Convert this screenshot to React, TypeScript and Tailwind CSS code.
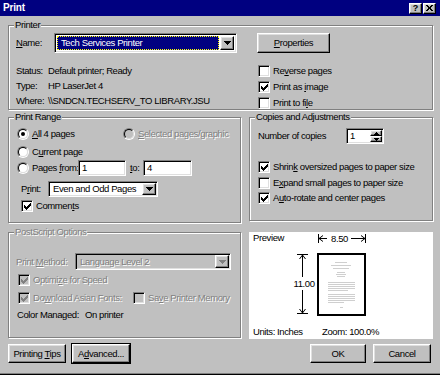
import React from 'react';

const raised =
  'border border-t-white border-l-white border-r-black border-b-black shadow-[inset_-1px_-1px_0_#808080,inset_1px_1px_0_#dfdfdf]';
const sunken =
  'border border-t-[#808080] border-l-[#808080] border-r-white border-b-white shadow-[inset_1px_1px_0_#000,inset_-1px_-1px_0_#dfdfdf]';
const dim = 'text-[#808080] [text-shadow:1px_1px_0_#fff]';

const Key = ({ children }: { children: React.ReactNode }) => <span className="underline">{children}</span>;

const Group = ({
  label,
  disabled,
  className,
  children,
}: {
  label: string;
  disabled?: boolean;
  className?: string;
  children: React.ReactNode;
}) => (
  <div className={`relative border border-[#808080] shadow-[1px_1px_0_#fff,inset_1px_1px_0_#fff] ${className}`}>
    <span className={`absolute -top-[7px] left-[5px] bg-[#c0c0c0] px-[1px] leading-[12px] ${disabled ? dim : ''}`}>
      {label}
    </span>
    {children}
  </div>
);

const CheckBox = ({ checked, disabled }: { checked?: boolean; disabled?: boolean }) => (
  <span
    className={`${sunken} w-[12px] h-[12px] shrink-0 flex items-center justify-center ${
      disabled ? 'bg-[#c0c0c0]' : 'bg-white'
    }`}
  >
    {checked && (
      <svg width="7" height="7" viewBox="0 0 7 7" shapeRendering="crispEdges">
        <path
          d="M6 0h1v1h-1z M5 1h2v1h-2z M0 2h1v1h-1z M4 2h3v1h-3z M0 3h2v1h-2z M3 3h3v1h-3z M0 4h5v1h-5z M1 5h3v1h-3z M2 6h1v1h-1z"
          fill={disabled ? '#808080' : '#000'}
        />
      </svg>
    )}
  </span>
);

const Radio = ({ checked, disabled }: { checked?: boolean; disabled?: boolean }) => (
  <span className="relative w-[12px] h-[12px] shrink-0 rounded-full border border-t-[#808080] border-l-[#808080] border-r-white border-b-white">
    <span
      className={`absolute inset-0 rounded-full border border-t-black border-l-black border-r-[#dfdfdf] border-b-[#dfdfdf] ${
        disabled ? 'bg-[#c0c0c0]' : 'bg-white'
      }`}
    />
    {checked && <span className="absolute left-[3px] top-[3px] w-[4px] h-[4px] rounded-full bg-black" />}
  </span>
);

const DownArrow = ({ disabled }: { disabled?: boolean }) => (
  <svg width="7" height="4" viewBox="0 0 7 4" shapeRendering="crispEdges">
    <path d="M0 0h7v1h-1v1h-1v1h-1v1h-1v-1h-1v-1h-1v-1h-1z" fill={disabled ? '#808080' : '#000'} />
  </svg>
);

const ArrowButton = ({ disabled }: { disabled?: boolean }) => (
  <span className={`${raised} bg-[#c0c0c0] w-[14px] h-full shrink-0 flex items-center justify-center`}>
    <DownArrow disabled={disabled} />
  </span>
);

const Select = ({ value, disabled, className }: { value: string; disabled?: boolean; className?: string }) => (
  <div className={`${sunken} ${disabled ? 'bg-[#c0c0c0]' : 'bg-white'} flex p-[1px] ${className}`}>
    <span className={`flex-1 pl-[3px] flex items-center whitespace-nowrap overflow-hidden ${disabled ? dim : ''}`}>
      {value}
    </span>
    <ArrowButton disabled={disabled} />
  </div>
);

const Field = ({ value, className }: { value: string; className?: string }) => (
  <div className={`${sunken} bg-white flex items-center pl-[3px] ${className}`}>{value}</div>
);

const CheckRow = ({
  checked,
  disabled,
  className,
  children,
}: {
  checked?: boolean;
  disabled?: boolean;
  className?: string;
  children: React.ReactNode;
}) => (
  <div className={`flex items-center gap-[3px] ${className}`}>
    <CheckBox checked={checked} disabled={disabled} />
    <span className={`whitespace-nowrap ${disabled ? dim : ''}`}>{children}</span>
  </div>
);

const Button = ({ className, children }: { className?: string; children: React.ReactNode }) => (
  <button className={`${raised} bg-[#c0c0c0] h-[19px] flex items-center justify-center ${className}`}>
    <span className="whitespace-nowrap">{children}</span>
  </button>
);

const PreviewDiagram = () => (
  <svg className="absolute left-0 top-0" width="184" height="107" viewBox="0 0 184 107">
    {/* width 8.50 */}
    <path d="M69.5 2v9M116.5 2v9M70 6.5h8M102 6.5h14" stroke="#000" fill="none" />
    <path d="M70 6.5l4 -3M70 6.5l4 3M116 6.5l-4 -3M116 6.5l-4 3" stroke="#000" fill="none" />
    <text x="90.5" y="10" textAnchor="middle" fontSize="9.5" fontFamily="Liberation Sans, Arial, sans-serif" letterSpacing="-0.4">
      8.50
    </text>
    {/* height 11.00 */}
    <path d="M48 22.5h11M48 81.5h11M53.5 23v22M53.5 58v23" stroke="#000" fill="none" />
    <path d="M53.5 23l-3 4M53.5 23l3 4M53.5 81l-3 -4M53.5 81l3 -4" stroke="#000" fill="none" />
    <text x="55" y="55" textAnchor="middle" fontSize="9.5" fontFamily="Liberation Sans, Arial, sans-serif" letterSpacing="-0.4">
      11.00
    </text>
    {/* page */}
    <rect x="69" y="22" width="47" height="61" fill="#fff" stroke="#000" strokeWidth="2" />
    <g fill="#cfcfcf">
      <rect x="86" y="30" width="12" height="1" />
      <rect x="82" y="33" width="20" height="1" />
      <rect x="84" y="36" width="16" height="1" />
      <rect x="88" y="40" width="8" height="1" />
      <rect x="87" y="42" width="10" height="1" />
      <rect x="88" y="44" width="8" height="1" />
      <rect x="79" y="50" width="27" height="1" />
      <rect x="79" y="52" width="27" height="1" />
      <rect x="79" y="54" width="27" height="1" />
      <rect x="79" y="56" width="27" height="1" />
      <rect x="79" y="58" width="20" height="1" />
      <rect x="79" y="62" width="27" height="1" />
      <rect x="79" y="64" width="27" height="1" />
      <rect x="79" y="66" width="27" height="1" />
      <rect x="79" y="68" width="27" height="1" />
      <rect x="79" y="70" width="16" height="1" />
      <rect x="91" y="75" width="3" height="1" />
    </g>
  </svg>
);

export default function App() {
  return (
    <div className="w-[440px] h-[375px] bg-[#c0c0c0] flex flex-col border-b border-black shadow-[inset_0_-1px_0_#808080] font-['Liberation_Sans',Arial,sans-serif] text-[9.5px] tracking-[-0.4px] leading-[12px] text-black">
      {/* Title bar */}
      <div className="h-[16px] bg-[#000080] flex items-center justify-between pl-[3px] pr-[4px]">
        <span className="text-white font-bold text-[10px] tracking-[-0.2px] leading-none">Print</span>
        <div className="flex gap-[1px]">
          <span className={`${raised} bg-[#c0c0c0] w-[13px] h-[11px] flex items-center justify-center text-[9px] font-bold leading-none tracking-normal`}>
            ?
          </span>
          <span className={`${raised} bg-[#c0c0c0] w-[13px] h-[11px] flex items-center justify-center`}>
            <svg width="7" height="6" viewBox="0 0 7 6" shapeRendering="crispEdges">
              <path d="M0 0h2v1h1v1h1v-1h1v-1h2v1h-1v1h-1v2h1v1h1v1h-2v-1h-1v-1h-1v1h-1v1h-2v-1h1v-1h1v-2h-1v-1h-1z" fill="#000" />
            </svg>
          </span>
        </div>
      </div>

      <div className="flex flex-col pl-[8px] pr-[7px]">
        {/* Printer */}
        <Group label="Printer" className="mt-[9px] h-[85px] pt-[7px] pl-[7px]">
          <div className="flex items-center h-[20px]">
            <span className="w-[38px]">
              <Key>N</Key>ame:
            </span>
            <div className={`${sunken} bg-white w-[183px] h-[20px] flex p-[2px] gap-[1px]`}>
              <span className="flex-1 bg-[#000080] text-white border border-dotted border-[#ffff00] flex items-center pl-[3px] whitespace-nowrap">
                Tech Services Printer
              </span>
              <ArrowButton />
            </div>
            <Button className="ml-[20px] w-[73px] h-[20px]">
              <Key>P</Key>roperties
            </Button>
          </div>
          <div className="flex mt-[10px]">
            <div className="w-[242px] flex flex-col">
              <div className="flex items-center h-[15px]">
                <span className="w-[32px]">Status:</span>
                <span>Default printer; Ready</span>
              </div>
              <div className="flex items-center h-[15px]">
                <span className="w-[32px]">Type:</span>
                <span>HP LaserJet 4</span>
              </div>
              <div className="flex items-center h-[15px]">
                <span className="w-[32px]">Where:</span>
                <span>\\SNDCN.TECHSERV_TO LIBRARY.JSU</span>
              </div>
            </div>
            <div className="flex flex-col">
              <CheckRow className="h-[16px]">
                Re<Key>v</Key>erse pages
              </CheckRow>
              <CheckRow checked className="h-[16px]">
                Print as <Key>i</Key>mage
              </CheckRow>
              <CheckRow className="h-[16px]">
                Print to fi<Key>l</Key>e
              </CheckRow>
            </div>
          </div>
        </Group>

        {/* Print range + copies */}
        <div className="flex justify-between items-start mt-[7px]">
          <Group label="Print Range" className="w-[233px] h-[106px] pt-[8px] pl-[8px]">
            <div className="flex items-center h-[16px]">
              <div className="w-[106px] flex items-center gap-[3px]">
                <Radio checked />
                <span>
                  <Key>A</Key>ll 4 pages
                </span>
              </div>
              <div className="flex items-center gap-[3px]">
                <Radio disabled />
                <span className={dim}>
                  <Key>S</Key>elected pages/graphic
                </span>
              </div>
            </div>
            <div className="flex items-center gap-[3px] h-[16px] mt-[2px]">
              <Radio />
              <span>
                C<Key>u</Key>rrent page
              </span>
            </div>
            <div className="flex items-center h-[16px]">
              <Radio />
              <span className="ml-[3px] w-[46px] whitespace-nowrap">
                Pages <Key>f</Key>rom:
              </span>
              <Field value="1" className="w-[48px] h-[16px]" />
              <span className="ml-[4px] w-[13px]">
                <Key>t</Key>o:
              </span>
              <Field value="4" className="w-[49px] h-[16px]" />
            </div>
            <div className="flex items-center h-[16px] mt-[5px] ml-[4px]">
              <span className="w-[27px]">
                P<Key>r</Key>int:
              </span>
              <Select value="Even and Odd Pages" className="w-[110px] h-[16px]" />
            </div>
            <CheckRow checked className="h-[16px] mt-[1px] ml-[4px]">
              Commen<Key>t</Key>s
            </CheckRow>
          </Group>

          <Group label="Copies and Adjustments" className="w-[184px] h-[104px] pt-[10px] pl-[8px]">
            <div className="flex items-center h-[16px]">
              <span className="w-[88px]">Number of copies</span>
              <div className={`${sunken} bg-white w-[38px] h-[16px] flex p-[1px]`}>
                <span className="flex-1 pl-[2px] flex items-center">1</span>
                <div className="flex flex-col w-[12px]">
                  <span className={`${raised} bg-[#c0c0c0] flex-1 flex items-center justify-center`}>
                    <svg width="5" height="3" viewBox="0 0 5 3" shapeRendering="crispEdges">
                      <path d="M2 0h1v1h1v1h1v1h-5v-1h1v-1h1z" fill="#000" />
                    </svg>
                  </span>
                  <span className={`${raised} bg-[#c0c0c0] flex-1 flex items-center justify-center`}>
                    <svg width="5" height="3" viewBox="0 0 5 3" shapeRendering="crispEdges">
                      <path d="M0 0h5v1h-1v1h-1v1h-1v-1h-1v-1h-1z" fill="#000" />
                    </svg>
                  </span>
                </div>
              </div>
            </div>
            <CheckRow checked className="h-[16px] mt-[15px]">
              Shrin<Key>k</Key> oversized pages to paper size
            </CheckRow>
            <CheckRow className="h-[15px]">
              E<Key>x</Key>pand small pages to paper size
            </CheckRow>
            <CheckRow checked className="h-[16px]">
              A<Key>u</Key>to-rotate and center pages
            </CheckRow>
          </Group>
        </div>

        {/* PostScript + preview */}
        <div className="flex justify-between items-start mt-[9px]">
          <Group label="PostScript Options" disabled className="w-[233px] h-[106px] pt-[20px] pl-[7px]">
            <div className="flex items-center h-[17px]">
              <span className={`w-[59px] whitespace-nowrap ${dim}`}>
                Print <Key>M</Key>ethod:
              </span>
              <Select value="Language Level 2" disabled className="w-[156px] h-[17px]" />
            </div>
            <CheckRow checked disabled className="h-[16px] mt-[2px] ml-[2px]">
              Optimi<Key>z</Key>e for Speed
            </CheckRow>
            <div className="flex items-center h-[16px] mt-[2px] ml-[2px]">
              <CheckRow checked disabled className="w-[115px]">
                Do<Key>w</Key>nload Asian Fonts:
              </CheckRow>
              <CheckRow disabled>
                Sa<Key>v</Key>e Printer Memory
              </CheckRow>
            </div>
            <div className="flex items-center h-[16px] mt-[1px] ml-[1px]">
              <span className="w-[68px]">Color Managed:</span>
              <span>On printer</span>
            </div>
          </Group>

          <div className="relative w-[184px] h-[107px] bg-white flex flex-col justify-between px-[4px]">
            <PreviewDiagram />
            <span className="relative leading-[11px]">Preview</span>
            <div className="relative flex leading-[12px] pb-[1px]">
              <span className="w-[69px]">Units: Inches</span>
              <span>Zoom: 100.0%</span>
            </div>
          </div>
        </div>

        {/* Buttons */}
        <div className="flex items-center mt-[5px]">
          <Button className="w-[58px]">
            Printing <Key>T</Key>ips
          </Button>
          <Button className="ml-[6px] w-[58px] outline outline-1 outline-black">
            A<Key>d</Key>vanced...
          </Button>
          <Button className="ml-auto w-[56px]">OK</Button>
          <Button className="ml-[7px] mr-[2px] w-[58px]">Cancel</Button>
        </div>
      </div>
    </div>
  );
}
